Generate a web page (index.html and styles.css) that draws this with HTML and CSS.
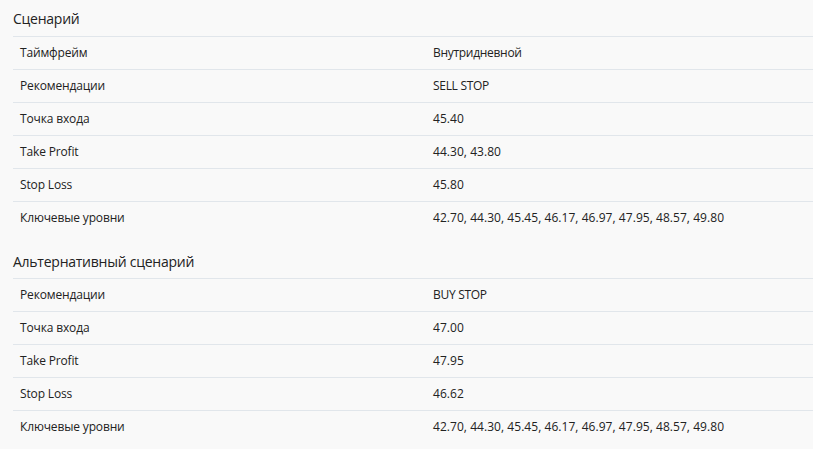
FILE: index.html
```html
<!DOCTYPE html>
<html lang="ru">
<head>
<meta charset="utf-8">
<title>Сценарий</title>
<link rel="stylesheet" href="styles.css">
</head>
<body>
<div class="page">
  <section class="scenario">
    <h2 class="scenario-title">Сценарий</h2>
    <div class="grid">
      <div class="row"><div class="cell label">Таймфрейм</div><div class="cell value">Внутридневной</div></div>
      <div class="row"><div class="cell label">Рекомендации</div><div class="cell value">SELL STOP</div></div>
      <div class="row"><div class="cell label">Точка входа</div><div class="cell value num">45.40</div></div>
      <div class="row"><div class="cell label">Take Profit</div><div class="cell value num">44.30, 43.80</div></div>
      <div class="row"><div class="cell label">Stop Loss</div><div class="cell value num">45.80</div></div>
      <div class="row"><div class="cell label">Ключевые уровни</div><div class="cell value num">42.70, 44.30, 45.45, 46.17, 46.97, 47.95, 48.57, 49.80</div></div>
    </div>
  </section>
  <section class="scenario alt">
    <h2 class="scenario-title">Альтернативный сценарий</h2>
    <div class="grid">
      <div class="row"><div class="cell label">Рекомендации</div><div class="cell value">BUY STOP</div></div>
      <div class="row"><div class="cell label">Точка входа</div><div class="cell value num">47.00</div></div>
      <div class="row"><div class="cell label">Take Profit</div><div class="cell value num">47.95</div></div>
      <div class="row"><div class="cell label">Stop Loss</div><div class="cell value num">46.62</div></div>
      <div class="row"><div class="cell label">Ключевые уровни</div><div class="cell value num">42.70, 44.30, 45.45, 46.17, 46.97, 47.95, 48.57, 49.80</div></div>
    </div>
  </section>
</div>
</body>
</html>
```

FILE: styles.css
```css
html, body {
  margin: 0;
  padding: 0;
  background: #f9f9f9;
}
body {
  font-family: "Open Sans", "Noto Sans", sans-serif;
  color: #222;
}
.page {
  padding-left: 13px;
}
.scenario-title {
  margin: 0;
  height: 36px;
  box-sizing: border-box;
  display: flex;
  align-items: center;
  font-size: 14px;
  font-weight: 400;
  letter-spacing: -0.25px;
}
.alt {
  margin-top: 8px;
}
.alt .scenario-title {
  padding-top: 2px;
}
.row {
  display: grid;
  grid-template-columns: 413px 1fr;
  height: 33px;
  box-sizing: border-box;
  border-top: 1px solid #e1e6eb;
  padding-bottom: 2px;
  align-items: center;
  font-size: 12px;
}
.cell {
  padding-left: 7px;
  letter-spacing: -0.3px;
}
.label {
  letter-spacing: -0.15px;
}
.num {
  letter-spacing: 0.05px;
}
```
